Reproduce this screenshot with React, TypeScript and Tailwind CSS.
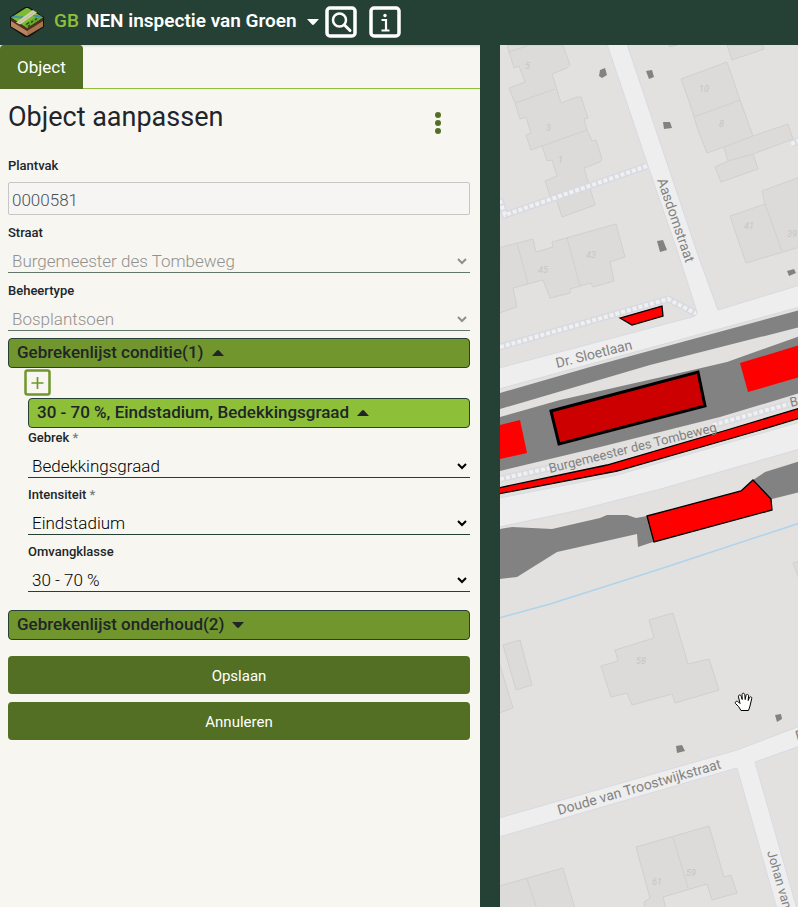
import type { ReactNode } from "react";

const buildings = [
  "507,45 514,68 519,66 525,82 509,88 515,103 520,119 526,117 531,133 526,135 531,150 542,146 547,161 552,160 557,176 545,181 550,196 557,201 562,217 595,205 584,168 600,162 602,159 596,140 592,141 587,130 584,119 588,118 581,97 577,97 561,103 552,74 567,68 570,65 563,45",
  "681,79 727,62 740,100 753,136 788,124 793,139 753,154 758,169 721,182 715,167 728,161 724,147 707,153 698,130 694,117 689,101",
  "727,45 732,60 764,49 763,45",
  "668,45 670,47 677,45",
  "730,216 765,204 762,191 800,177 800,247 746,263",
  "500,247 502,247 533,239 536,252 553,247 552,242 616,224 625,257 610,262 614,281 593,287 591,283 570,289 570,293 550,298 543,280 513,288 517,307 499,313",
  "649,620 673,613 688,664 709,659 719,690 675,703 672,694 632,705 627,693 611,697 601,666 618,661 615,650 654,638",
  "503,645 520,640 532,685 516,690",
  "499,662 513,708 499,713",
  "793,563 800,561 800,582",
  "636,847 709,826 724,877 731,875 737,893 712,900 707,884 663,897 666,909 645,909 644,902 650,898",
  "499,886 563,868 575,909 499,909",
];

const walls =
  "M509 52L530 45M515 103L555 89M542 146L587 130M550 196L590 184M694 117L740 100M724 147L753 136M728 161L753 154M765 204L782 251M567 238L580 286M517 243L528 284M673 837L688 888M527 879L537 909";

const shrubs = [
  "600,70 605,68 607,75 602,78 599,76",
  "646,71 652,70 654,77 649,79",
  "663,122 670,122 672,128 664,129",
  "657,241 663,240 667,250 660,252",
  "787,271 794,269 796,273 789,276",
  "775,715 781,714 782,719 777,722",
  "676,746 682,745 685,751 677,753",
];

const houseNumbers: [string, number, number][] = [
  ["5", 525, 69],
  ["3", 546, 131],
  ["1", 558, 163],
  ["10", 699, 92],
  ["8", 719, 127],
  ["41", 744, 229],
  ["39", 787, 237],
  ["43", 586, 258],
  ["45", 538, 273],
  ["58", 636, 664],
  ["61", 652, 885],
  ["59", 686, 876],
];

function Footway({ d }: { d: string }) {
  return (
    <>
      <path d={d} fill="none" stroke="#d8dae2" strokeWidth="7" />
      <path d={d} fill="none" stroke="#f0f0f0" strokeWidth="4" strokeDasharray="4 2" />
    </>
  );
}

function MapView() {
  return (
    <svg
      className="absolute inset-0 h-full w-full"
      viewBox="500 45 298 862"
      preserveAspectRatio="xMinYMin slice"
      role="img"
      aria-label="Kaart"
    >
      <rect x="500" y="45" width="1200" height="1800" fill="#e2e1df" />
      <g fill="#dcdbd9" stroke="#d0d0ce" strokeWidth="1">
        {buildings.map((p) => (
          <polygon key={p} points={p} />
        ))}
        <path d={walls} fill="none" />
      </g>
      <g fill="#c6c6c4" fontFamily="Roboto, sans-serif" fontSize="9" fontStyle="italic">
        {houseNumbers.map(([n, x, y]) => (
          <text key={n} x={x} y={y}>
            {n}
          </text>
        ))}
      </g>
      <Footway d="M647 166L505 215L499 198" />
      <Footway d="M500 347L668 299L697 314" />
      <Footway d="M791 144L800 140" />
      <g fill="#eeeeee" stroke="#d8dae2" strokeWidth="1">
        <path d="M607 44L647 163L678 253L697 312Q697 316 692 317L499 368V389L800 307V285L718 310L699 258L627 44Z" />
        <path d="M499 498L617 475L800 422V449L657 490L575 511L499 527Z" />
        <path d="M499 818L737 750L800 726V746L755 762L797 909H777L737 768L499 837Z" />
      </g>
      <g fill="#828282">
        <path d="M500 393L590 367L800 310V327L650 365L500 409Z" />
        <path d="M500 417L560 400L697 369L727 362L800 336V393L720 417L600 447L500 471Z" />
        <path d="M500 529L512 527L552 529L600 518L607 515H627L636 518L647 516L741 491L753 480L765 472L800 461V492L772 499L653 542L638 547L637 534L557 552L517 577L500 579Z" />
        {shrubs.map((p) => (
          <polygon key={p} points={p} />
        ))}
      </g>
      <Footway d="M500 479L550 468" />
      <Footway d="M713 425L789 404" />
      <path d="M499 618L550 604L657 570L800 523" fill="none" stroke="#aed3ec" strokeWidth="1.5" />
      <g fill="#ff0000">
        <path d="M500 425L520 420L527 453L500 459Z" />
        <path d="M740 363L800 345V377L748 392Z" />
        <g stroke="#000" strokeWidth="1.3">
          <path d="M498 488L607 465L727 430L800 408V418L757 431L617 471L498 494Z" />
          <path d="M620 318L662 306L663 316L632 325Z" />
          <path d="M647 516L741 491L753 480L771 499L772 510L654 542Z" />
        </g>
      </g>
      <path d="M551 411L698 372L705 406L559 444Z" fill="#cc0000" stroke="#000" strokeWidth="3" />
      <g fill="#828282" fontFamily="Roboto, sans-serif" fontSize="14">
        <text transform="translate(557 368) rotate(-14)">Dr. Sloetlaan</text>
        <text transform="translate(550 473) rotate(-14)" fontSize="13">
          Burgemeester des Tombeweg
        </text>
        <text transform="translate(791 407) rotate(-14)" fontSize="13">
          B
        </text>
        <text transform="translate(559 815) rotate(-16)">Doude van Troostwijkstraat</text>
        <text transform="translate(657 180) rotate(71)">Aasdomstraat</text>
        <text transform="translate(767 852) rotate(74)" fontSize="13">
          Johan van
        </text>
        <text transform="translate(797 741) rotate(-16)">D</text>
      </g>
      <path
        d="M741 710.500L738.500 706.500L735.500 703.500C734.500 701.500 737 700.500 738.500 702L740 703.500L738.500 697C738 694.700 740.500 694.300 741.200 696.300L742.200 699.500L742 694.700C742 692.700 744.500 692.700 744.800 694.700L745.200 699.500L746 695.500C746.500 693.600 748.800 694.200 748.600 696L748.200 700.500L749.300 697.800C750.200 696 752.200 696.800 751.700 698.700L750 706L748.500 710.500Z"
        fill="#fff"
        stroke="#000"
        strokeWidth="1"
        strokeLinejoin="round"
      />
    </svg>
  );
}

function Logo() {
  return (
    <svg className="h-8 w-[34px]" viewBox="0 0 34 32" aria-hidden="true">
      <path d="M0 11L15 1H19L34 11V21L19 31H15L0 21Z" fill="#111" />
      <path d="M1 14L17 24V30L1 20.500Z" fill="#b98560" />
      <path d="M33 14L17 24V30L33 20.500Z" fill="#a8734d" />
      <path d="M1 12L17 22L33 12V15L17 25L1 15Z" fill="#4e2f1e" />
      <path d="M1 11.500L16 2H18L33 11.500L17 22Z" fill="#7dbb33" />
      <path d="M14 19L28 9L33 11.500L17 22Z" fill="#69a62b" />
      <path d="M2 11.500C7 9 9 13 13 10.500M22 8C25 12 28 9 31 10.500" fill="none" stroke="#3f8fb8" strokeWidth="1.800" />
      <path d="M6 16.500L23 4L27 6.500L10 18.500Z" fill="#d6d0b0" />
      <path d="M8 17.500L25 5.500" stroke="#b5ae8c" strokeWidth="0.800" />
      <path d="M16 18.500L19 16.500M21 16.500L23 15M18 20.500L20 19M25 14L27 12.500" stroke="#24470f" strokeWidth="1.500" />
    </svg>
  );
}

function Caret({ up = false }: { up?: boolean }) {
  return (
    <svg className="h-1.5 w-3" viewBox="0 0 12 6" aria-hidden="true">
      <path d={up ? "M0 6L5 0.500Q6 -0.300 7 0.500L12 6Z" : "M0 0H12L7 5.500Q6 6.300 5 5.500Z"} fill="currentColor" />
    </svg>
  );
}

function SelectField({
  id,
  label,
  value,
  required = false,
  disabled = false,
}: {
  id: string;
  label: string;
  value: string;
  required?: boolean;
  disabled?: boolean;
}) {
  return (
    <div>
      <label htmlFor={id} className="block text-[13px] leading-5 font-medium">
        {label}
        {required && <span className="text-[#777a7c]"> *</span>}
      </label>
      <select
        id={id}
        disabled={disabled}
        className="mt-1.5 block h-6 w-full border-b border-[#254135] bg-transparent text-[17px] font-light text-black disabled:text-[#666] disabled:opacity-70"
      >
        <option>{value}</option>
      </select>
    </div>
  );
}

function SectionBar({ children, open = false, nested = false }: { children: ReactNode; open?: boolean; nested?: boolean }) {
  return (
    <button
      type="button"
      aria-expanded={open}
      className={`flex h-[30px] w-full items-center gap-2 rounded-sm border border-[#254135] px-2 text-[17px] font-medium ${
        nested ? "bg-[#8dbf39]" : "bg-[#70962d]"
      }`}
    >
      {children}
      <Caret up={open} />
    </button>
  );
}

export default function App() {
  return (
    <div className="flex min-h-screen flex-col bg-[#254135] font-['Roboto','Noto_Sans',sans-serif] text-[#212529]">
      <header className="flex h-[45px] shrink-0 items-center px-2.5 pb-0.5 text-white">
        <Logo />
        <span className="ml-2.5 text-[19px] font-medium text-[#8dbf39]">GB</span>
        <button type="button" className="ml-[7px] flex items-center gap-2.5 text-[19px] font-semibold">
          NEN inspectie van Groen
          <Caret />
        </button>
        <button type="button" aria-label="Zoeken" className="ml-1.5">
          <svg className="size-8" viewBox="0 0 32 32" fill="none" stroke="white" strokeLinecap="round">
            <rect x="2" y="2" width="28" height="28" rx="3" strokeWidth="3.500" />
            <circle cx="14.500" cy="14" r="6.500" strokeWidth="2.500" />
            <path d="M19.500 19L25 24.500" strokeWidth="3" />
          </svg>
        </button>
        <button type="button" aria-label="Informatie" className="ml-3">
          <svg className="size-8" viewBox="0 0 32 32" fill="none" stroke="white">
            <rect x="2" y="2" width="28" height="28" rx="3" strokeWidth="3.500" />
            <path d="M12.500 14H17V24M12.500 24.500H20.500" strokeWidth="2.200" />
            <circle cx="16" cy="9.500" r="1.700" fill="white" stroke="none" />
          </svg>
        </button>
      </header>

      <div className="flex flex-1">
        <aside className="w-[480px] shrink-0 bg-[#f7f6f1]">
          <nav className="flex h-11 border-b border-[#8dbf39] shadow-[inset_0_3px_3px_-2px_#00000020]">
            <a href="#object" className="flex h-11 items-center rounded-t-sm bg-[#526f24] px-[17px] pt-0.5 text-[17px] text-white">
              Object
            </a>
          </nav>

          <form className="px-2 pr-2.5">
            <div className="flex h-[67px] justify-between pt-2">
              <h1 className="pt-0.5 text-[27px] leading-9 font-normal">Object aanpassen</h1>
              <button type="button" aria-label="Meer opties" className="mr-7 h-[52px]">
                <svg className="h-6 w-2" viewBox="0 0 8 24" fill="#526f24">
                  <circle cx="4" cy="4" r="3" />
                  <circle cx="4" cy="12" r="3" />
                  <circle cx="4" cy="20" r="3" />
                </svg>
              </button>
            </div>

            <div className="flex flex-col gap-2">
              <div>
                <label htmlFor="plantvak" className="block text-[13px] leading-5 font-medium">
                  Plantvak
                </label>
                <input
                  id="plantvak"
                  readOnly
                  defaultValue="0000581"
                  className="mt-1.5 block h-[33px] w-full rounded-xs border border-[#c6c6c4] bg-[#f6f5f4] px-[3px] pt-0.5 text-[17px] font-light text-[#495057]"
                />
              </div>
              <SelectField id="straat" label="Straat" value="Burgemeester des Tombeweg" disabled />
              <SelectField id="beheertype" label="Beheertype" value="Bosplantsoen" disabled />
            </div>
            <div className="mt-[7px]">
              <SectionBar open>Gebrekenlijst conditie(1)</SectionBar>
            </div>

            <div className="pl-5">
              <div className="flex h-[30px] items-center pb-px">
                <button type="button" aria-label="Toevoegen" className="-ml-1">
                  <svg className="size-[27px]" viewBox="0 0 27 27" fill="none" stroke="#70962d">
                    <rect x="1.500" y="1.500" width="24" height="24" rx="2" strokeWidth="2.500" />
                    <path d="M13.500 8V20M7.500 14H19.500" strokeWidth="1.700" />
                  </svg>
                </button>
              </div>
              <SectionBar open nested>
                30 - 70 %, Eindstadium, Bedekkingsgraad
              </SectionBar>
              <div className="flex flex-col gap-[7px]">
                <SelectField id="gebrek" label="Gebrek" value="Bedekkingsgraad" required />
                <SelectField id="intensiteit" label="Intensiteit" value="Eindstadium" required />
                <SelectField id="omvangklasse" label="Omvangklasse" value="30 - 70 %" />
              </div>
            </div>

            <div className="mt-[18px]">
              <SectionBar>Gebrekenlijst onderhoud(2)</SectionBar>
            </div>

            <div className="mt-4 flex flex-col gap-2">
              <button type="submit" className="h-[38px] rounded-sm bg-[#526f24] pt-0.5 text-[15px] text-white">
                Opslaan
              </button>
              <button type="button" className="h-[38px] rounded-sm bg-[#526f24] pt-0.5 text-[15px] text-white">
                Annuleren
              </button>
            </div>
          </form>
        </aside>
        <main className="relative ml-5 flex-1 overflow-hidden">
          <MapView />
        </main>
      </div>
    </div>
  );
}
